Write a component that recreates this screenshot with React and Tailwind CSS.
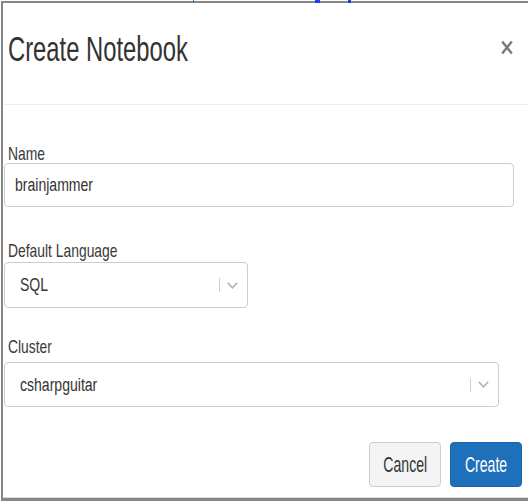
import React from "react";

function Chevron() {
  return (
    <svg width="11" height="7" viewBox="0 0 11 7" className="block">
      <path d="M0.8 0.8 L5.5 5.8 L10.2 0.8" fill="none" stroke="#b3b3b3" strokeWidth="1.6" />
    </svg>
  );
}

function Label({ children, mt }) {
  return (
    <div className={`pl-[4px] h-[19px] text-[19px] leading-[19px] text-[#3a3a3a] whitespace-nowrap ${mt}`}>
      <span className="inline-block origin-left scale-x-[0.73]">{children}</span>
    </div>
  );
}

function Select({ value, width, height, mt }) {
  return (
    <div
      className={`${width} ${height} ${mt} flex items-center border border-[#cccccc] rounded-[4px] bg-white pl-[15px] pr-[9px]`}
    >
      <div className="flex-1 text-[18px] leading-[18px] text-[#333] whitespace-nowrap">
        <span className="inline-block origin-left scale-x-[0.78]">{value}</span>
      </div>
      <div className="w-px h-[14px] bg-[#cfcfcf]"></div>
      <div className="ml-[7px]">
        <Chevron />
      </div>
    </div>
  );
}

export default function App() {
  return (
    <div className="relative w-[528px] h-[504px] bg-white overflow-hidden font-['Liberation_Sans',Arial,sans-serif]">
      <span className="absolute left-[193px] top-0 w-px h-[3px] bg-[#1b7fd1]"></span>
      <span className="absolute left-[315px] top-0 w-[5px] h-[3px] bg-[#1f3cf0]"></span>
      <span className="absolute left-[348px] top-0 w-[3px] h-[3px] bg-[#1f3cf0]"></span>
      <div className="mt-px ml-px h-[500px] border-t-2 border-l-2 border-b-[3px] border-[#868686]">
        <div className="h-full flex flex-col border-b border-[#dcdcdc]">
          <div className="h-[102px] flex items-start justify-between border-b border-[#ececec] ml-px pl-[4px] pr-[15px]">
            <div className="mt-[28px] h-[35px] text-[35px] leading-[35px] text-[#333] whitespace-nowrap">
              <span className="inline-block origin-left scale-x-[0.68]">Create Notebook</span>
            </div>
            <svg width="12" height="15" viewBox="0 0 12 15" className="mt-[37px] block">
              <path d="M1.2 1.5 L10.8 13.5 M10.8 1.5 L1.2 13.5" stroke="#7a7a7a" strokeWidth="2.4" />
            </svg>
          </div>
          <div className="flex flex-col pl-px">
            <Label mt="mt-[39px]">Name</Label>
            <div className="w-[510px] h-[44px] flex items-center border border-[#cccccc] rounded-[4px] pl-[10px]">
              <div className="text-[18px] leading-[18px] text-[#333] whitespace-nowrap">
                <span className="inline-block origin-left scale-x-[0.78]">brainjammer</span>
              </div>
            </div>
            <Label mt="mt-[34px]">Default Language</Label>
            <Select value="SQL" width="w-[244px]" height="h-[46px]" mt="mt-[2px]" />
            <Label mt="mt-[29px]">Cluster</Label>
            <Select value="csharpguitar" width="w-[495px]" height="h-[45px]" mt="mt-[6px]" />
            <div className="mt-[35px] flex justify-end gap-[9px] pr-[6px]">
              <div className="w-[72px] h-[45px] flex items-center justify-center rounded-[4px] border border-[#cccccc] bg-[#f4f4f4] text-[22px] leading-[22px] text-[#333]">
                <span className="inline-block origin-center scale-x-[0.64]">Cancel</span>
              </div>
              <div className="w-[72px] h-[45px] flex items-center justify-center rounded-[4px] border border-[#1a63a8] bg-[#1e70bb] text-[22px] leading-[22px] text-white">
                <span className="inline-block origin-center scale-x-[0.64]">Create</span>
              </div>
            </div>
          </div>
        </div>
      </div>
    </div>
  );
}
